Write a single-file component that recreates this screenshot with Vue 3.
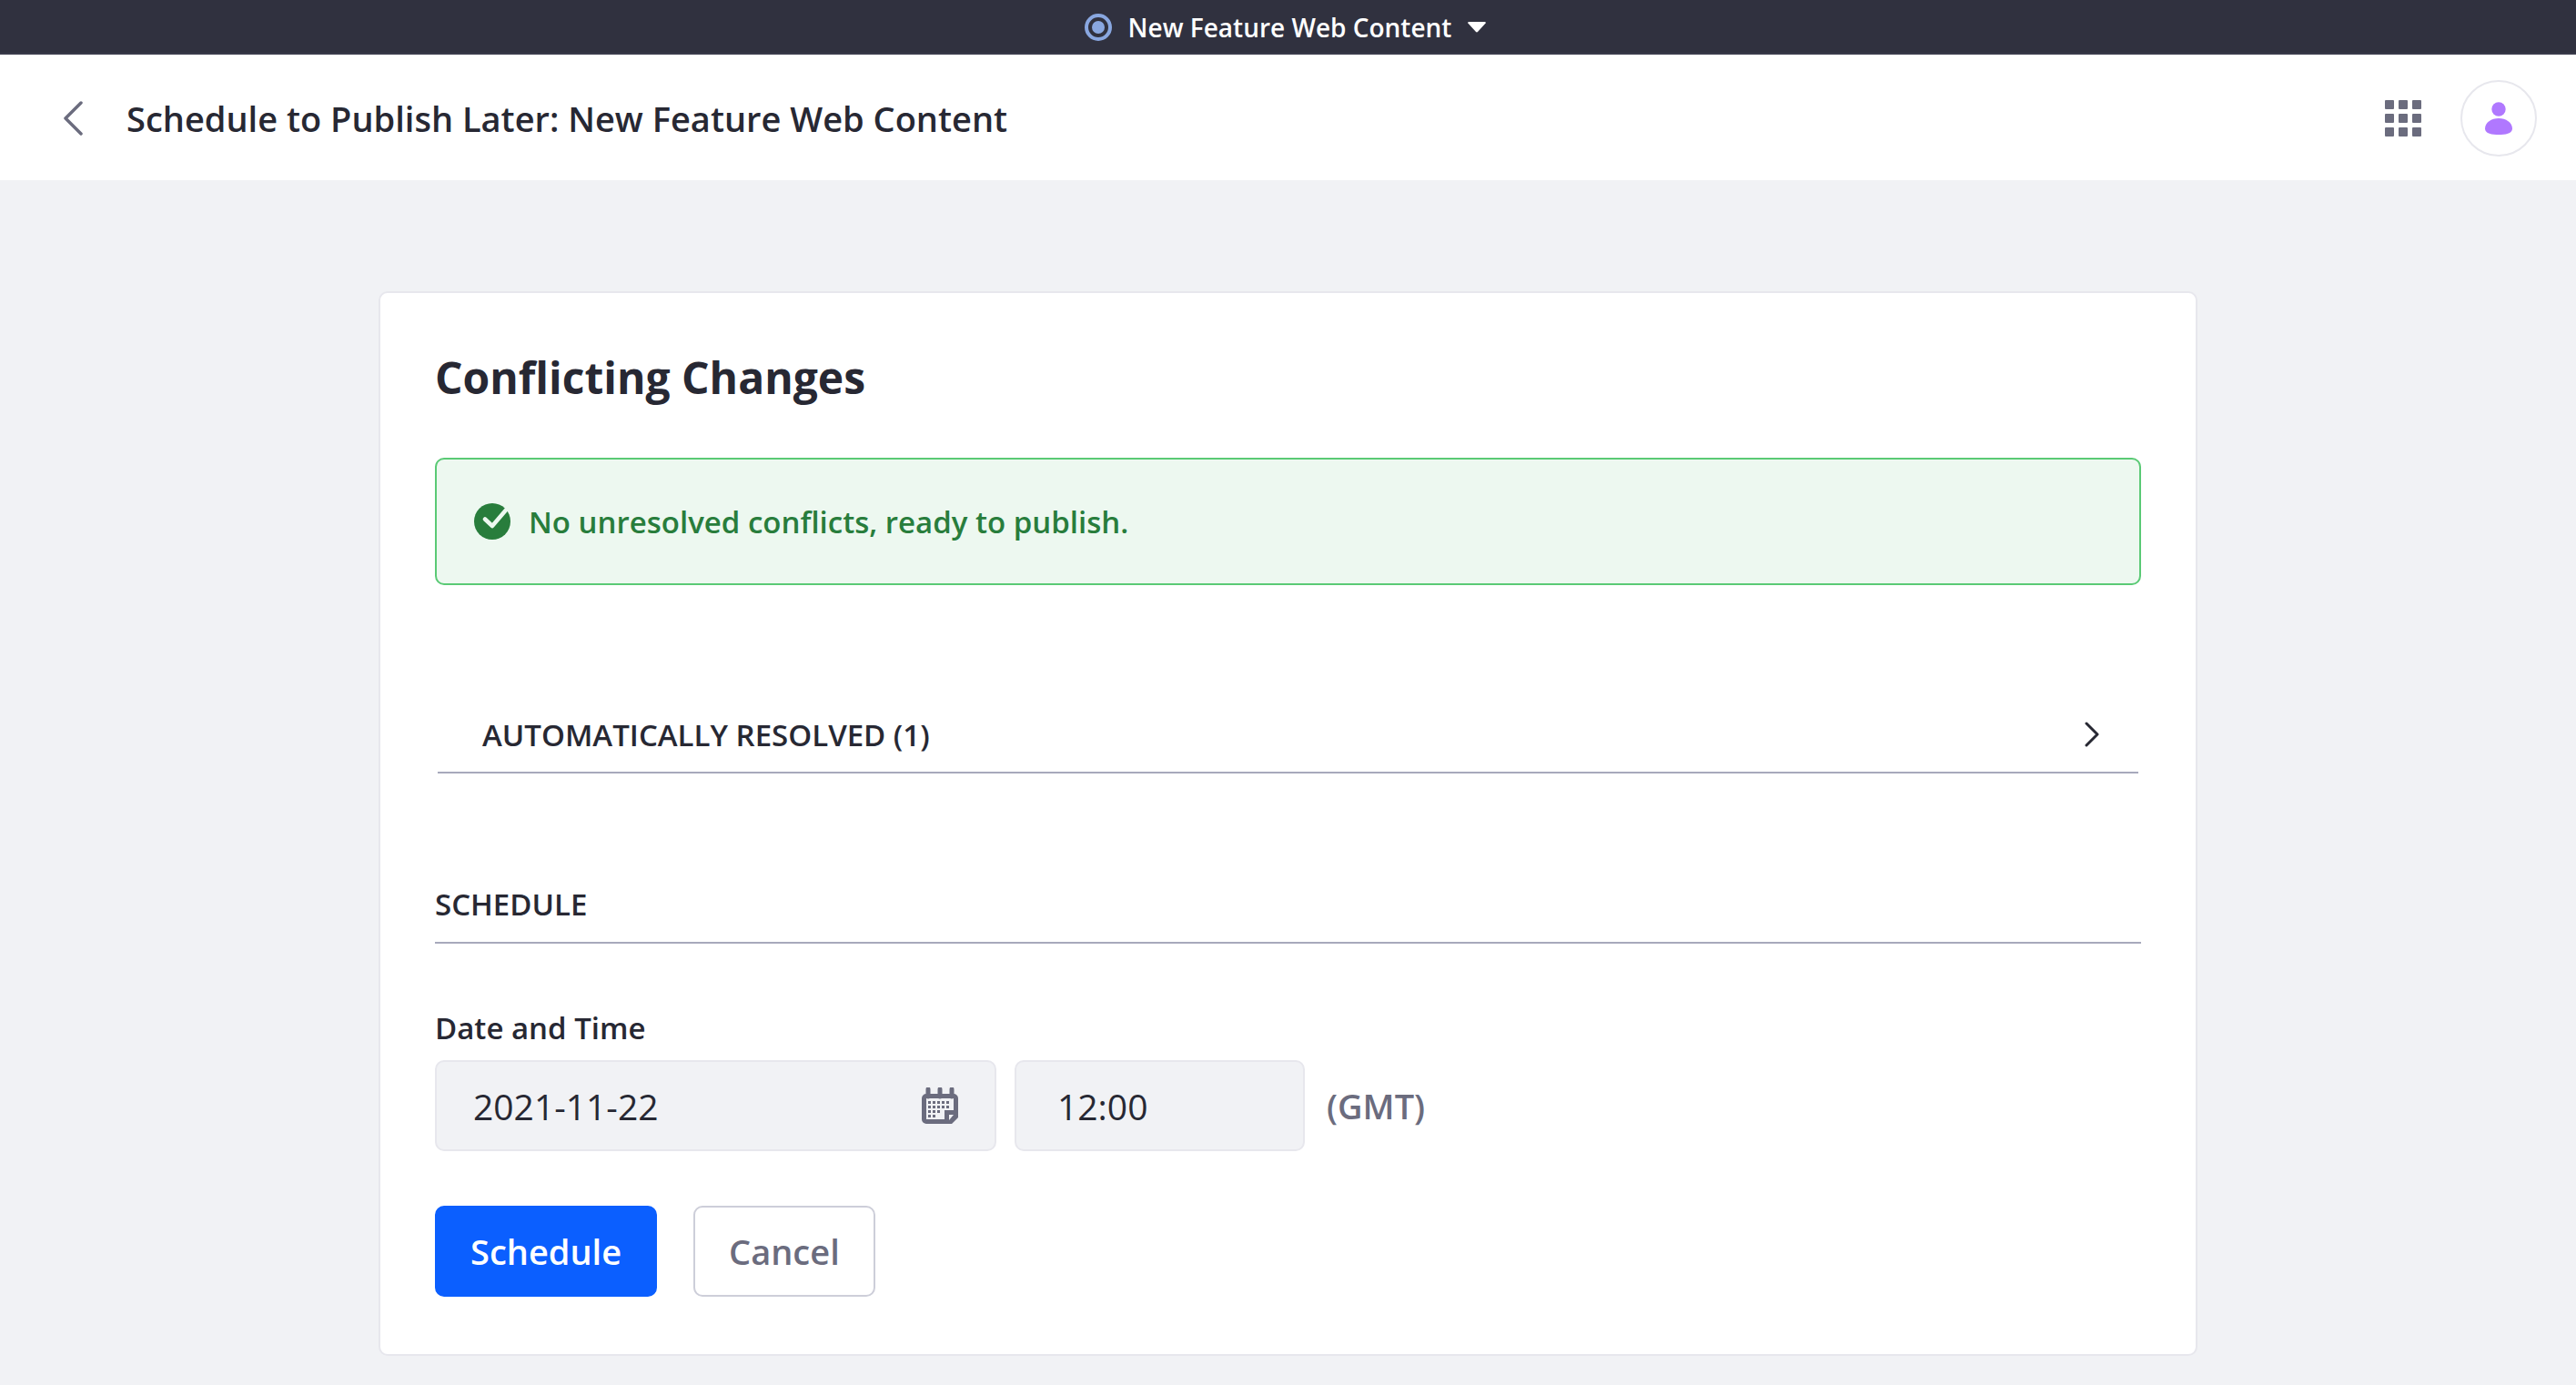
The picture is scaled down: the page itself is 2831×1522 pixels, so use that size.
<script setup>
import { ref } from 'vue'

const publication = 'New Feature Web Content'
const resolvedCount = 1
const date = ref('2021-11-22')
const time = ref('12:00')
const cells = [0, 15, 30]
const dayMarks = [
  [6, 15], [11, 15], [16, 15], [21, 15], [26, 15],
  [6, 20], [11, 20], [16, 20], [21, 20], [26, 20],
  [6, 25], [11, 25], [16, 25],
  [6, 30], [11, 30],
]
</script>

<template>
  <div class="page">
    <div class="publication-bar">
      <button type="button" class="publication-toggle">
        <svg class="status-icon" viewBox="0 0 30 30" aria-hidden="true">
          <circle cx="15" cy="15" r="13" fill="none" stroke="currentColor" stroke-width="4" />
          <circle cx="15" cy="15" r="7" fill="currentColor" />
        </svg>
        <span>{{ publication }}</span>
        <svg class="caret-icon" viewBox="0 0 20 12" aria-hidden="true">
          <path d="M1 0h18q1.600.600.400 1.800l-8.200 9q-1.200 1.200-2.400 0l-8.200-9Q-.6.600 1 0z" fill="currentColor" />
        </svg>
      </button>
    </div>

    <header class="header">
      <a href="#" class="back" aria-label="Back">
        <svg viewBox="0 0 22 38" aria-hidden="true">
          <path d="M20 2 3 19l17 17" fill="none" stroke="currentColor" stroke-width="3.500" stroke-linecap="round" stroke-linejoin="round" />
        </svg>
      </a>
      <h1 class="title">Schedule to Publish Later: {{ publication }}</h1>
      <button type="button" class="apps" aria-label="Applications">
        <svg viewBox="0 0 40 40" aria-hidden="true">
          <template v-for="y in cells" :key="y">
            <rect v-for="x in cells" :key="x" :x="x" :y="y" width="10" height="10" rx="1" fill="currentColor" />
          </template>
        </svg>
      </button>
      <button type="button" class="avatar" aria-label="User profile">
        <svg viewBox="0 0 30 36" aria-hidden="true">
          <circle cx="15" cy="8" r="7.700" fill="currentColor" />
          <path d="M15 18c8 0 15 4.500 15 11.500C30 35 22 36 15 36S0 35 0 29.500C0 22.500 7 18 15 18z" fill="currentColor" />
        </svg>
      </button>
    </header>

    <main class="main">
      <form class="card" @submit.prevent>
        <h2 class="card-title">Conflicting Changes</h2>

        <div class="alert" role="status">
          <svg class="alert-icon" viewBox="0 0 40 40" aria-hidden="true">
            <circle cx="20" cy="20" r="20" fill="currentColor" />
            <path d="M12 17.500 20 25 38 4" fill="none" stroke="#edf8f0" stroke-width="4.500" stroke-linecap="round" stroke-linejoin="round" />
          </svg>
          <span>No unresolved conflicts, ready to publish.</span>
        </div>

        <button type="button" class="accordion" aria-expanded="false">
          <span>AUTOMATICALLY RESOLVED ({{ resolvedCount }})</span>
          <svg viewBox="0 0 16 28" aria-hidden="true">
            <path d="M2 2l12 12L2 26" fill="none" stroke="currentColor" stroke-width="3" stroke-linecap="round" stroke-linejoin="round" />
          </svg>
        </button>

        <h3 class="section-title">SCHEDULE</h3>

        <label class="label" for="publish-date">Date and Time</label>
        <div class="fields">
          <div class="date-field">
            <input id="publish-date" v-model="date" type="text" class="input">
            <button type="button" class="calendar" aria-label="Choose date">
              <svg viewBox="0 0 40 40" aria-hidden="true">
                <path d="M7 2v8M20 2v8M33 2v8" stroke="currentColor" stroke-width="5" stroke-linecap="round" />
                <path fill-rule="evenodd" d="M5 7h30a5 5 0 0 1 5 5v21l-7 7H5a5 5 0 0 1-5-5V12a5 5 0 0 1 5-5zM5 12v23h20V25h10V12z" fill="currentColor" />
                <path d="M30 30h5l-5 6z" fill="#f1f2f5" />
                <rect v-for="([x, y], i) in dayMarks" :key="i" :x="x + 1" :y="y" width="3" height="3" fill="currentColor" />
              </svg>
            </button>
          </div>
          <input v-model="time" type="text" class="input time" aria-label="Time">
          <span class="zone">(GMT)</span>
        </div>

        <div class="actions">
          <button type="submit" class="button primary">Schedule</button>
          <button type="button" class="button secondary">Cancel</button>
        </div>
      </form>
    </main>
  </div>
</template>

<style>
body {
  margin: 0;
  background: #f1f2f5;
}
</style>

<style scoped>
.page,
.page * {
  box-sizing: border-box;
}

.page {
  display: flex;
  flex-direction: column;
  min-height: 100vh;
  color: #272833;
  font-family: "Open Sans", "Noto Sans", sans-serif;
  font-size: 33px;
  font-weight: 600;
}

.page button {
  margin: 0;
  border: 0;
  padding: 0;
  background: none;
  color: inherit;
  font: inherit;
  cursor: pointer;
}

.page svg {
  display: block;
  flex: none;
}

.publication-bar {
  display: flex;
  justify-content: center;
  height: 60px;
  border-bottom: 2px solid #393a4a;
  background: #30313f;
}

.page .publication-toggle {
  display: flex;
  align-items: center;
  gap: 18px;
  padding: 2px 6px 0 0;
  color: #fff;
  font-size: 28px;
}

.status-icon {
  width: 30px;
  height: 30px;
  color: #89a7e0;
}

.caret-icon {
  width: 20px;
  height: 12px;
}

.header {
  display: flex;
  align-items: center;
  height: 138px;
  padding: 2px 43px 0 59px;
  background: #fff;
}

.back {
  padding: 0 10px;
  color: #6b6c7e;
}

.back svg {
  width: 22px;
  height: 38px;
}

.title {
  flex: 1;
  margin: 0 0 0 38px;
  font-size: 38px;
  font-weight: 600;
  line-height: 60px;
}

.page .apps {
  margin-right: 43px;
  color: #6b6c7e;
}

.apps svg {
  width: 40px;
  height: 40px;
}

.page .avatar {
  display: grid;
  place-items: center;
  width: 84px;
  height: 84px;
  border: 2px solid #e7e7ed;
  border-radius: 50%;
  color: #b078ff;
}

.avatar svg {
  width: 30px;
  height: 36px;
}

.main {
  flex: 1;
  padding: 122px 60px 32px;
}

.card {
  max-width: 1999px;
  margin: 0 auto;
  padding: 61px 60px 63px;
  border: 2px solid #e7e7ed;
  border-radius: 10px;
  background: #fff;
}

.card-title {
  margin: 0;
  font-size: 48px;
  font-weight: 700;
  line-height: 64px;
}

.alert {
  display: flex;
  align-items: center;
  gap: 20px;
  height: 140px;
  margin-top: 56px;
  padding: 0 41px;
  border: 2px solid #5aca75;
  border-radius: 10px;
  background: #edf8f0;
  color: #287d3c;
}

.alert-icon {
  width: 40px;
  height: 40px;
}

.page .accordion {
  display: flex;
  align-items: center;
  justify-content: space-between;
  width: calc(100% - 6px);
  height: 80px;
  margin: 127px 3px 0;
  padding: 0 43px 4px 49px;
  border-bottom: 2px solid #a7a9bc;
}

.accordion svg {
  width: 16px;
  height: 28px;
}

.section-title {
  margin: 119px 0 0;
  padding-bottom: 16px;
  border-bottom: 2px solid #a7a9bc;
  font-size: 33px;
  font-weight: 600;
  line-height: 50px;
}

.label {
  display: block;
  margin: 69px 0 11px;
  line-height: 48px;
}

.fields {
  display: flex;
  align-items: center;
}

.date-field {
  position: relative;
  width: 617px;
}

.input {
  display: block;
  width: 100%;
  height: 100px;
  padding: 0 40px;
  border: 2px solid #e7e7ed;
  border-radius: 10px;
  outline: 0;
  background: #f1f2f5;
  color: #272833;
  font: 400 39px "Open Sans", "Noto Sans", sans-serif;
}

.page .calendar {
  position: absolute;
  top: 30px;
  right: 42px;
  color: #6b6c7e;
}

.calendar svg {
  width: 40px;
  height: 40px;
}

.time {
  width: 319px;
  margin: 0 24px 0 20px;
  padding-left: 45px;
}

.zone {
  color: #6b6c7e;
  font-size: 38px;
}

.actions {
  display: flex;
  gap: 40px;
  margin-top: 60px;
}

.page .button {
  height: 100px;
  padding: 0 37px;
  border: 2px solid #cdced9;
  border-radius: 10px;
  color: #6b6c7e;
  font-size: 38px;
}

.page .primary {
  border-color: #0b5fff;
  background: #0b5fff;
  color: #fff;
}
</style>
